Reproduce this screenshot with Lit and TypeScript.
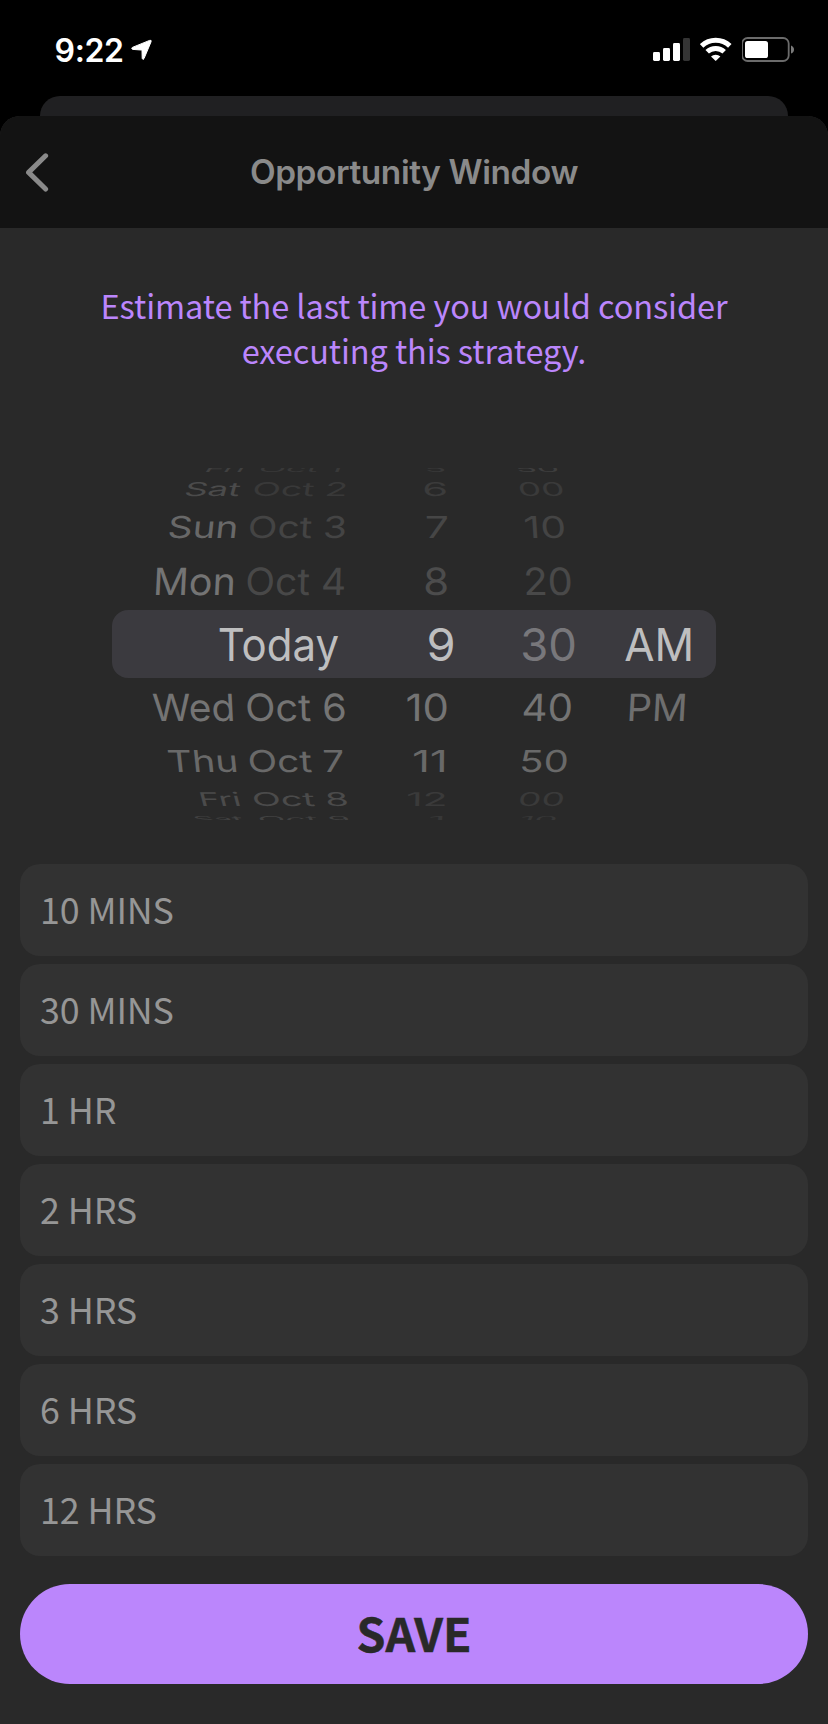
import { LitElement, html, svg, css } from "lit";
import { customElement } from "lit/decorators.js";

// [text, ink left, ink right, colour]
type Word = [string, number, number, string];

interface WheelRow {
  height: number; // visible height of the row
  baseline: number; // measured from the row's top
  cap: number; // foreshortened capital height
  lean: number; // slant of a stem 200px away from the wheel's axis
  words: Word[];
}

const AXIS = 302;
const WHEEL_FONT = 46;

const ROWS: WheelRow[] = [
  { height: 8, baseline: 4, cap: 6.5, lean: 0.75, words: [
    ["Fri", 94, 133, "#404040"], ["Oct 1", 147, 229, "#383838"],
    ["5", 314.7, 333, "#383838"], ["50", 404.7, 447, "#3e3e3e"]] },
  { height: 29, baseline: 20, cap: 13.8, lean: 0.27, words: [
    ["Sat", 72.5, 129.7, "#4b4b4b"], ["Oct 2", 141, 234, "#393939"],
    ["6", 312, 334, "#3b3b3b"], ["00", 406.7, 452, "#3a3a3a"]] },
  { height: 48, baseline: 33.2, cap: 21.9, lean: 0.1, words: [
    ["Sun", 56.5, 124.7, "#686868"], ["Oct 3", 137, 233.5, "#444444"],
    ["7", 314.7, 335.3, "#464646"], ["10", 413, 453, "#444444"]] },
  { height: 57, baseline: 41.9, cap: 27.3, lean: 0.045, words: [
    ["Mon", 44, 121.7, "#747474"], ["Oct 4", 134.7, 233, "#484848"],
    ["8", 313, 335, "#4c4c4c"], ["20", 413.6, 459.4, "#494949"]] },
  { height: 68, baseline: 50.8, cap: 32.6, lean: 0, words: [
    ["Today", 107.6, 226.3, "#bebebf"], ["9", 316.5, 341, "#bebebf"],
    ["30", 410.2, 463, "#78777b"], ["AM", 513.2, 578.8, "#bebebf"]] },
  { height: 57, baseline: 42.8, cap: 27.3, lean: -0.045, words: [
    ["Wed", 40.7, 121.3, "#747474"], ["Oct 6", 134.7, 233, "#747474"],
    ["10", 295.2, 335, "#747474"], ["40", 410.9, 459.4, "#747474"],
    ["PM", 517.5, 573.1, "#6e6e6e"]] },
  { height: 48, baseline: 36.8, cap: 21.9, lean: -0.1, words: [
    ["Thu", 56, 124.7, "#696969"], ["Oct 7", 137, 231.5, "#696969"],
    ["11", 301.8, 332.3, "#696969"], ["50", 409.4, 455.5, "#696969"]] },
  { height: 29, baseline: 22.8, cap: 13.8, lean: -0.27, words: [
    ["Fri", 88.7, 129, "#4b4b4b"], ["Oct 8", 141, 235.7, "#4b4b4b"],
    ["12", 295.7, 333, "#3a3a3a"], ["00", 406.7, 452, "#3a3a3a"]] },
  { height: 8, baseline: 10, cap: 6, lean: -0.75, words: [
    ["Sat", 81.3, 133, "#414141"], ["Oct 9", 146.7, 237.3, "#414141"],
    ["1", 318, 330.7, "#373737"], ["10", 408, 444.7, "#373737"]] },
];

const OPTIONS = ["10 MINS", "30 MINS", "1 HR", "2 HRS", "3 HRS", "6 HRS", "12 HRS"];

const pen = document.createElement("canvas").getContext("2d")!;

function project(row: WheelRow, [text, left, right]: Word): string {
  pen.font = `400 ${WHEEL_FONT}px Inter`;
  const m = pen.measureText(text);
  const inkLeft = -m.actualBoundingBoxLeft;
  const inkWidth = m.actualBoundingBoxRight - inkLeft;
  const lean = (row.lean * (AXIS - (left + right) / 2)) / 200;
  const spread = Math.abs(lean) * row.cap;
  const sx = (right - left - spread * 0.8) / inkWidth;
  const sy = row.cap / (WHEEL_FONT * 0.727);
  const dx = left - inkLeft * sx + (lean < 0 ? spread * 0.8 : 0);
  return `matrix(${sx} 0 ${-lean * sy} ${sy} ${dx} ${row.baseline})`;
}

@customElement("status-bar")
class StatusBar extends LitElement {
  static styles = css`
    :host { display: flex; justify-content: space-between; height: 96px; box-sizing: border-box; padding: 34px 33px 0 54.6px; }
    .time { display: flex; align-items: flex-start; font: 600 32px/33px Inter, sans-serif; color: #fff; }
    .clock { letter-spacing: -0.4px; width: 76.4px; white-space: nowrap; }
    .icons { display: flex; gap: 10px; }
    svg { display: block; }
  `;
  render() {
    return html`
      <div class="time">
        <span class="clock">9:22</span>
        <svg width="22" height="30" viewBox="0 0 22 30">
          <path d="M1.4 13.4 18.6 6.4Q20.8 5.6 20 7.9L13 24.6Q12 26.4 11.2 24.4L11 16.7Q10.9 16 10.2 16L1.8 15.4Q-.2 14.6 1.4 13.4Z" fill="#fff" stroke="#fff" stroke-width="1" stroke-linejoin="round" />
        </svg>
      </div>
      <div class="icons">
        <svg width="37" height="30" viewBox="0 0 37 30">
          <rect x="0" y="18" width="7" height="9" rx="1.4" fill="#fff" />
          <rect x="10" y="14" width="7" height="13" rx="1.4" fill="#fff" />
          <rect x="20" y="9" width="7" height="18" rx="1.4" fill="#fff" />
          <rect x="30" y="4" width="7" height="23" rx="1.4" fill="#343434" />
        </svg>
        <svg width="32" height="30" viewBox="0 0 32 30">
          <g fill="none" stroke="#fff" stroke-width="5">
            <path d="M1.6 11.9A20.3 20.3 0 0 1 29.8 11.9" />
            <path d="M7.2 17.8A12.3 12.3 0 0 1 24.2 17.8" />
          </g>
          <path d="M15.7 27 11 22.6A6.6 6.6 0 0 1 20.4 22.6Z" fill="#fff" />
        </svg>
        <svg width="53" height="30" viewBox="0 0 53 30">
          <rect x=".1" y="4" width="46.6" height="23" rx="5.6" fill="none" stroke="#6b6b6b" stroke-width="1.8" />
          <rect x="3" y="7" width="23" height="17" rx="2.6" fill="#fff" />
          <path d="M49 11.4Q52 12.6 52 15.6T49 19.6Z" fill="#7a7a7a" />
        </svg>
      </div>
    `;
  }
}

@customElement("time-wheel")
class TimeWheel extends LitElement {
  static styles = css`
    :host { display: flex; flex-direction: column; width: 604px; margin: 0 auto; }
    .row { display: block; overflow: hidden; }
    .selected { background: #3b3a3f; border-radius: 16px; }
    text { font: 400 46px Inter, sans-serif; }
  `;
  render() {
    return ROWS.map(
      (row) => html`<svg class="row ${row.lean === 0 ? "selected" : ""}" width="604" height=${row.height}>
        ${row.words.map((w) => svg`<text transform=${project(row, w)} fill=${w[3]}>${w[0]}</text>`)}
      </svg>`
    );
  }
}

@customElement("app-root")
class AppRoot extends LitElement {
  static styles = css`
    :host { display: block; background: #000; height: 1724px; overflow: hidden; font-family: "Noto Sans CJK JP", sans-serif; }
    .behind { height: 20px; margin: 0 40px; background: #202022; border-radius: 20px 20px 0 0; }
    .sheet { height: 1608px; background: #292929; border-radius: 20px 20px 0 0; overflow: hidden; }
    .header { display: grid; grid-template-columns: 72px 1fr 72px; align-items: center; height: 112px; background: #131313; }
    .back { display: block; margin-left: 24px; }
    .title { margin: 0; text-align: center; font: 600 33.4px/40px Inter, sans-serif; letter-spacing: -0.4px; color: #8a8a8a; white-space: nowrap; }
    .hint { margin: 0; padding-top: 54px; height: 186px; text-align: center; font-size: 32.5px; letter-spacing: -0.1px; line-height: 45px; color: #bb86fc; white-space: nowrap; }
    .options { display: flex; flex-direction: column; gap: 8px; margin: 44px 20px 28px; }
    .option { display: flex; align-items: center; height: 92px; box-sizing: border-box; padding: 0 20px 5px; border-radius: 20px; background: #323232; color: #969696; font-size: 35.8px; letter-spacing: -0.1px; line-height: 50px; }
    .save { display: flex; align-items: center; justify-content: center; height: 100px; box-sizing: border-box; padding-bottom: 4px; margin: 0 20px; border-radius: 50px; background: #bb86fc; color: #292929; font-size: 46.4px; font-weight: 700; line-height: 60px; -webkit-text-stroke: 0.5px #292929; }
  `;
  render() {
    return html`
      <status-bar></status-bar>
      <div class="behind"></div>
      <div class="sheet">
        <div class="header">
          <svg class="back" width="26" height="40" viewBox="0 0 26 40">
            <path d="M21.6 3.8 4.6 20.4 21.6 37" fill="none" stroke="#8a8a8a" stroke-width="5" stroke-linecap="round" stroke-linejoin="round" />
          </svg>
          <h1 class="title">Opportunity Window</h1>
        </div>
        <p class="hint">Estimate the last time you would consider<br />executing this strategy.</p>
        <time-wheel></time-wheel>
        <div class="options">${OPTIONS.map((o) => html`<div class="option">${o}</div>`)}</div>
        <div class="save">SAVE</div>
      </div>
    `;
  }
}
